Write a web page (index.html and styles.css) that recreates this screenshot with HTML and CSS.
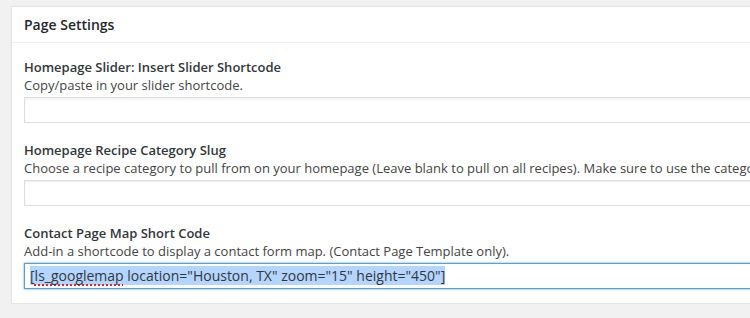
FILE: index.html
```html
<!DOCTYPE html>
<html lang="en">
<head>
  <meta charset="UTF-8">
  <title>Page Settings</title>
  <link rel="stylesheet" href="styles.css">
</head>
<body>
  <div class="wrap">
    <div class="postbox">
      <h2 class="hndle">Page Settings</h2>
      <div class="inside">

        <div class="option">
          <label class="option-title" for="slider">Homepage Slider: Insert Slider Shortcode</label>
          <p class="option-desc">Copy/paste in your slider shortcode.</p>
          <input type="text" id="slider" class="text-field">
        </div>

        <div class="option">
          <label class="option-title" for="slug">Homepage Recipe Category Slug</label>
          <p class="option-desc">Choose a recipe category to pull from on your homepage (Leave blank to pull on all recipes). Make sure to use the category slug.</p>
          <input type="text" id="slug" class="text-field">
        </div>

        <div class="option">
          <label class="option-title" for="map">Contact Page Map Short Code</label>
          <p class="option-desc">Add-in a shortcode to display a contact form map. (Contact Page Template only).</p>
          <div id="map" class="text-field focused"><span class="selected">[<span class="misspelled">ls_googlemap</span> location="Houston, TX" zoom="15" height="450"]</span></div>
        </div>

      </div>
    </div>
  </div>
</body>
</html>
```

FILE: styles.css
```css
body {
  margin: 0;
  background: #f1f1f1;
  font-family: "Open Sans", "Liberation Sans", sans-serif;
  font-size: 13px;
  color: #444;
  overflow: hidden;
}

.wrap {
  padding: 6px 0 0 11px;
}

.postbox {
  width: 800px;
  background: #fff;
  border: 1px solid #e5e5e5;
  box-shadow: 0 1px 1px rgba(0, 0, 0, 0.04);
}

.hndle {
  margin: 0;
  padding: 8px 12px;
  font-size: 14px;
  font-weight: 600;
  line-height: 19px;
  color: #23282d;
  border-bottom: 1px solid #eee;
}

.inside {
  padding: 15px 12px 14px;
}

.option + .option {
  margin-top: 18px;
}

.option-title {
  display: block;
  font-weight: 600;
  line-height: 18px;
  color: #32373c;
}

.option-desc {
  margin: 0;
  line-height: 18px;
  white-space: nowrap;
}

.text-field {
  display: block;
  box-sizing: border-box;
  width: 100%;
  height: 26px;
  margin-top: 3px;
  padding: 2px 5px;
  font-family: inherit;
  font-size: 14px;
  line-height: 20px;
  color: #32373c;
  background: #fff;
  border: 1px solid #ddd;
  box-shadow: inset 0 1px 2px rgba(0, 0, 0, 0.07);
  outline: none;
}

/* the focused field with its text selected */
.focused {
  border-color: #5b9dd9;
  box-shadow: 0 0 2px rgba(30, 140, 190, 0.8);
}

.selected {
  background: #b4d5fe;
}

.misspelled {
  text-decoration: underline dotted #e0262b;
  text-decoration-thickness: 2px;
  text-underline-offset: 3px;
}
```
